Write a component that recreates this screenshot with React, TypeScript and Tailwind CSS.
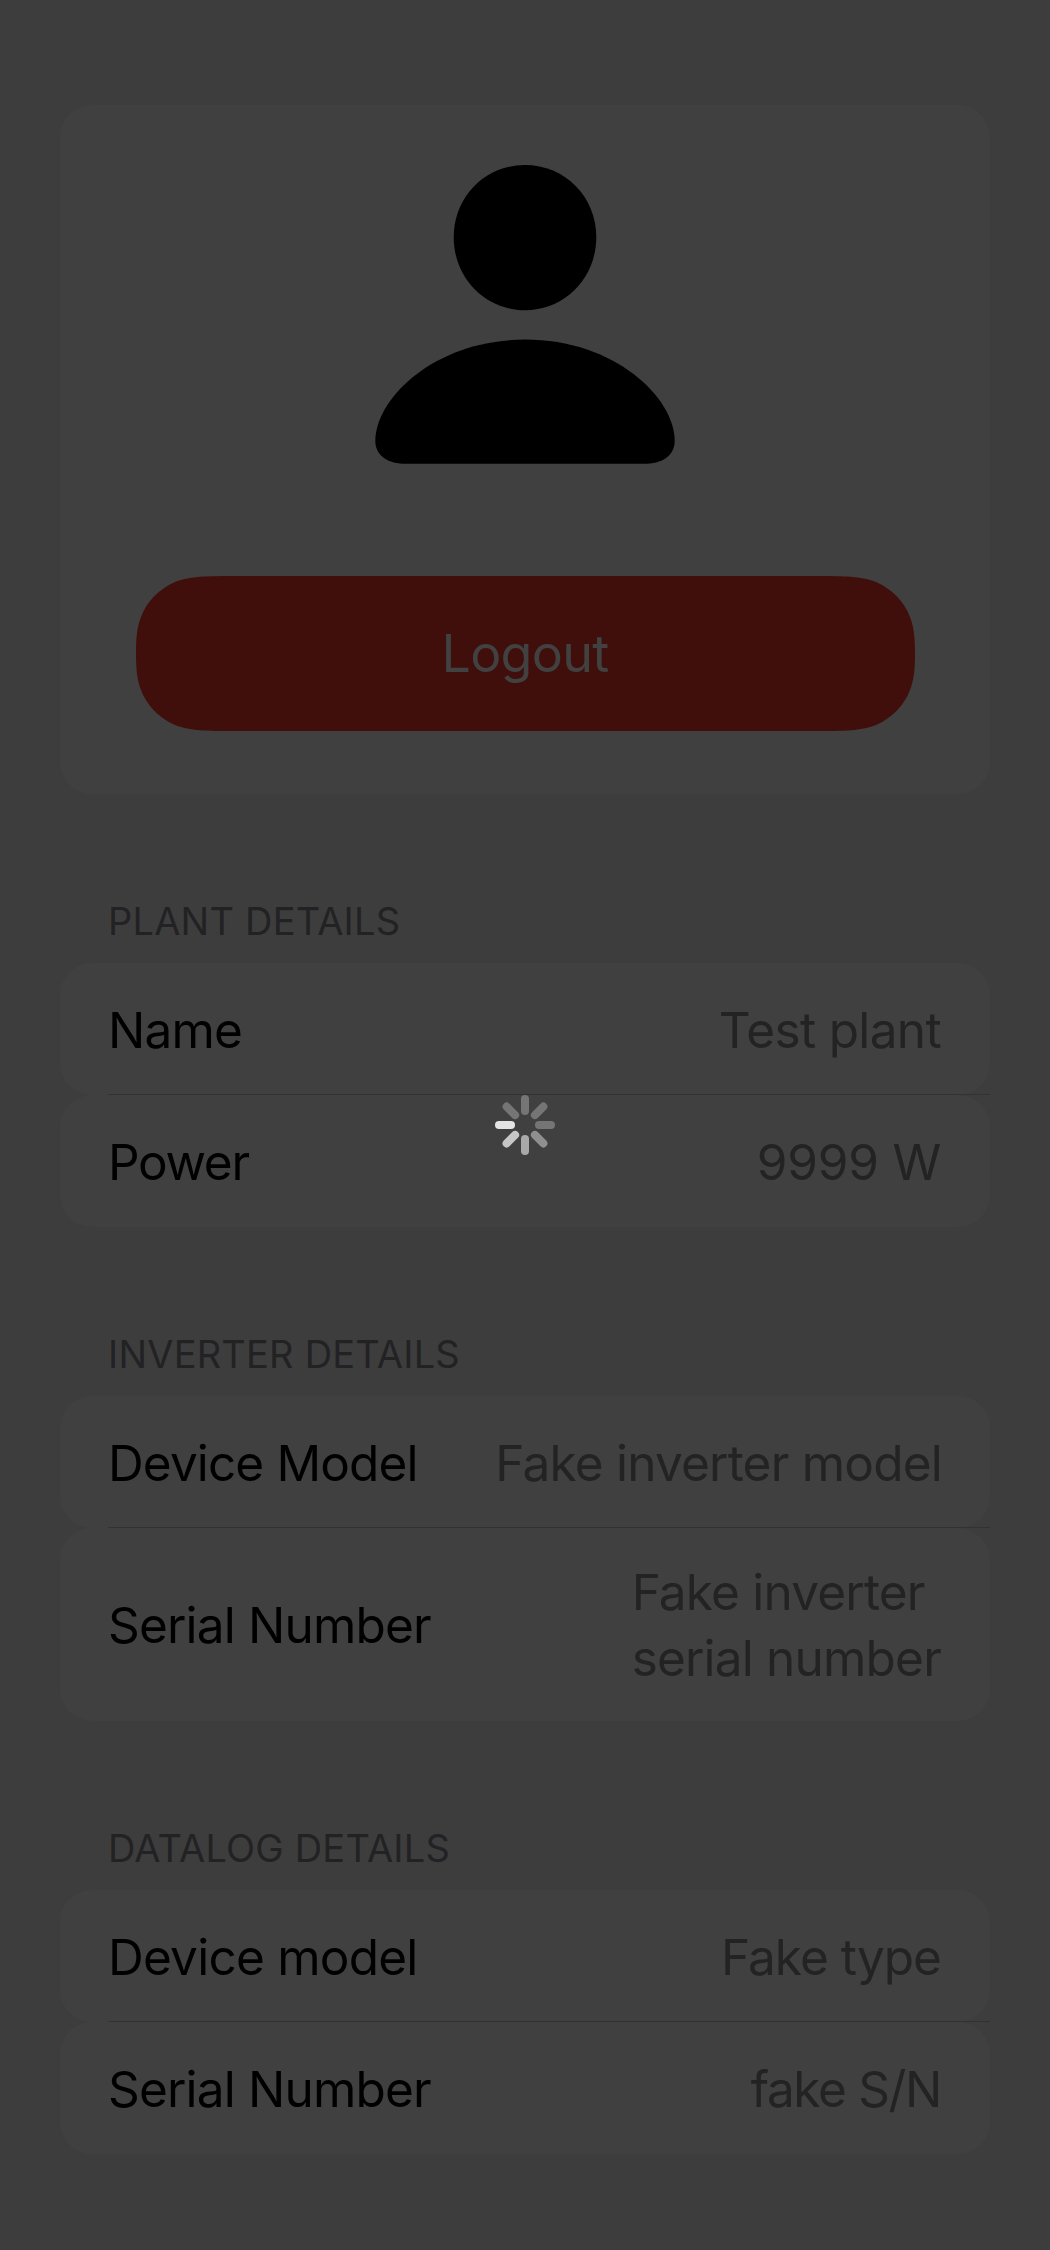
type Row = {
  label: string;
  labelClass: string;
  value: string[];
  valueClass: string;
  tall?: boolean;
};

type Section = { title: string; rows: Row[] };

const sections: Section[] = [
  {
    title: 'PLANT DETAILS',
    rows: [
      { label: 'Name', labelClass: 'tracking-[-0.82px]', value: ['Test plant'], valueClass: 'tracking-[-0.65px]' },
      { label: 'Power', labelClass: 'tracking-[-1.3px]', value: ['9999 W'], valueClass: 'tracking-[-0.2px]' },
    ],
  },
  {
    title: 'INVERTER DETAILS',
    rows: [
      { label: 'Device Model', labelClass: 'tracking-[-0.87px]', value: ['Fake inverter model'], valueClass: '-mr-px tracking-[-0.78px]' },
      { label: 'Serial Number', labelClass: 'tracking-[-0.82px]', value: ['Fake inverter', 'serial number'], valueClass: 'tracking-[-0.8px]', tall: true },
    ],
  },
  {
    title: 'DATALOG DETAILS',
    rows: [
      { label: 'Device model', labelClass: 'tracking-[-0.76px]', value: ['Fake type'], valueClass: 'tracking-[-0.98px]' },
      { label: 'Serial Number', labelClass: 'tracking-[-0.82px]', value: ['fake S/N'], valueClass: 'tracking-[-1.35px]' },
    ],
  },
];

// Spokes run clockwise from the top.
const spokes = ['#757575', '#757575', '#757575', '#8f8f8f', '#a9a9a9', '#c6c6c6', '#e4e4e4', '#757575'];

function PersonIcon() {
  return (
    <svg className="h-[300px] w-[300px]" viewBox="0 0 300 300" fill="#000">
      <path d="M150 1C190 1 221.3 32.8 221.3 73.3C221.3 113.8 190 146.2 150 146.2C110 146.2 78.7 113.8 78.7 73.3C78.7 32.8 110 1 150 1Z" />
      <path d="M28 299.7C10 299 0.3 289.5 0.3 277C0.3 234 60 175.6 150 175.6C240 175.6 299.7 234 299.7 277C299.7 289.5 290 299 272 299.7Z" />
    </svg>
  );
}

function LogoutButton() {
  return (
    <button className="relative flex h-[155px] w-[779px] items-center justify-center">
      <svg className="absolute inset-0 h-full w-full" viewBox="0 0 779 155" fill="#400e0b">
        <path d="M0 77.5C0 60 1.3 51 4.8 41.5C10.5 26 23 13 38.5 6.3C51 1 66 0 94.5 0H684.5C713 0 728 1 740.5 6.3C756 13 768.5 26 774.2 41.5C777.7 51 779 60 779 77.5C779 95 777.7 104 774.2 113.5C768.5 129 756 142 740.5 148.7C728 154 713 155 684.5 155H94.5C66 155 51 154 38.5 148.7C23 142 10.5 129 4.8 113.5C1.3 104 0 95 0 77.5Z" />
      </svg>
      <span className="relative text-[52px] leading-[66px] tracking-[-0.74px] text-[#404140]">Logout</span>
    </button>
  );
}

function DetailRow({ row, last }: { row: Row; last: boolean }) {
  return (
    <div className={row.tall ? 'relative h-[193px]' : 'relative h-[132px] pt-[2px]'}>
      <div className="absolute inset-0 rounded-[32px] bg-[#404040]" />
      <div className="relative flex h-full items-center justify-between pr-[49px] pl-12 text-[49.5px] leading-[66px]">
        <span className={`text-black ${row.labelClass}`}>{row.label}</span>
        <span className={`text-[#232323] ${row.valueClass}`}>
          {row.value.map((line) => (
            <span key={line} className="block whitespace-nowrap">
              {line}
            </span>
          ))}
        </span>
      </div>
      {!last && <div className="absolute right-0 bottom-0 left-12 h-px bg-[#323232]" />}
    </div>
  );
}

function Spinner() {
  return (
    <svg className="h-[60px] w-[60px]" viewBox="-30 -30 60 60">
      {spokes.map((color, i) => (
        <rect key={i} x="-4" y="-30" width="8" height="20" rx="4" fill={color} transform={`rotate(${i * 45})`} />
      ))}
    </svg>
  );
}

export default function App() {
  return (
    <div className="relative flex h-[2250px] w-[1050px] flex-col gap-[101px] overflow-hidden bg-[#3d3d3d] px-[60px] pt-[105px] font-['Inter',sans-serif]">
      <div className="flex h-[689px] shrink-0 flex-col items-center rounded-[32px] bg-[#404040] pt-[59px]">
        <PersonIcon />
        <div className="mt-[112px]">
          <LogoutButton />
        </div>
      </div>
      {sections.map((section) => (
        <section key={section.title}>
          <h2 className="mb-4 pl-12 text-[38px] leading-[52px] tracking-[0.2px] text-[#222224]">{section.title}</h2>
          {section.rows.map((row, i) => (
            <DetailRow key={row.label} row={row} last={i === section.rows.length - 1} />
          ))}
        </section>
      ))}
      <div className="absolute inset-0 flex items-center justify-center">
        <Spinner />
      </div>
    </div>
  );
}
